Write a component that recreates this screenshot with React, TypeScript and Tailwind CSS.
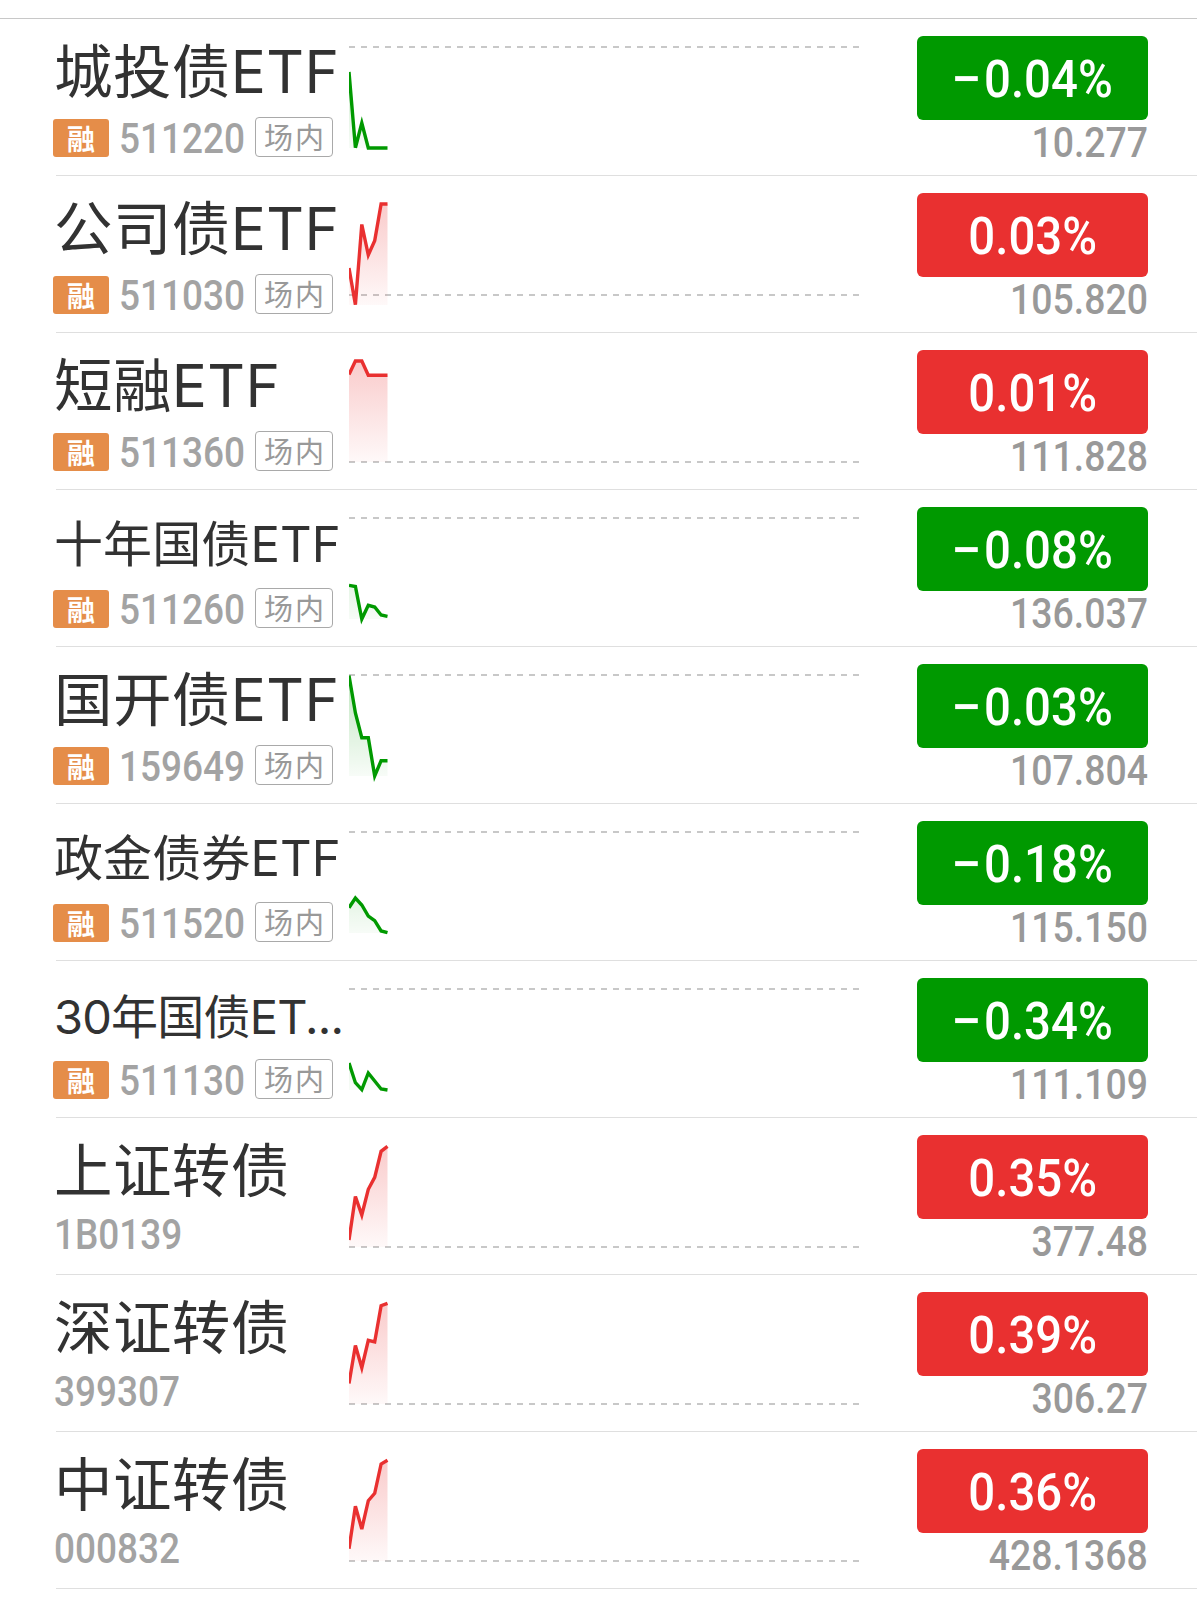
import React from 'react';
import clsx from 'clsx';

interface Quote {
    name: string;
    size: 'lg' | 'md' | 'sm';
    code: string;
    margin: boolean;
    change: string;
    price: string;
    up: boolean;
    base: number;
    points: number[];
}

// base = y of the previous close line, points = y of every tick so far
const quotes: Quote[] = [
    { name: '城投债ETF', size: 'lg', code: '511220', margin: true, change: '0.04%', price: '10.277', up: false, base: 28, points: [53, 128.7, 104, 129, 129, 129, 129] },
    { name: '公司债ETF', size: 'lg', code: '511030', margin: true, change: '0.03%', price: '105.820', up: true, base: 119, points: [92, 128.7, 48.5, 79, 64.7, 28, 28] },
    { name: '短融ETF', size: 'lg', code: '511360', margin: true, change: '0.01%', price: '111.828', up: true, base: 129, points: [41.5, 28, 28, 42.3, 42.3, 42.3, 42.3] },
    { name: '十年国债ETF', size: 'md', code: '511260', margin: true, change: '0.08%', price: '136.037', up: false, base: 28, points: [95.3, 96.5, 129, 115.3, 117, 125, 126.3] },
    { name: '国开债ETF', size: 'lg', code: '159649', margin: true, change: '0.03%', price: '107.804', up: false, base: 28, points: [28.5, 66, 90.7, 90.7, 129, 113.7, 113.7] },
    { name: '政金债券ETF', size: 'md', code: '511520', margin: true, change: '0.18%', price: '115.150', up: false, base: 28, points: [103.7, 94, 101, 112, 116.7, 127, 128.7] },
    { name: '30年国债ET...', size: 'sm', code: '511130', margin: true, change: '0.34%', price: '111.109', up: false, base: 28, points: [102, 121.7, 128.7, 112, 120, 128, 129] },
    { name: '上证转债', size: 'lg', code: '1B0139', margin: false, change: '0.35%', price: '377.48', up: true, base: 129, points: [122, 78.5, 97, 71.3, 59.3, 33.3, 28.3] },
    { name: '深证转债', size: 'lg', code: '399307', margin: false, change: '0.39%', price: '306.27', up: true, base: 129, points: [108.5, 70.5, 92.7, 65.3, 67, 30.7, 28.3] },
    { name: '中证转债', size: 'lg', code: '000832', margin: false, change: '0.36%', price: '428.1368', up: true, base: 129, points: [116.7, 74.3, 97, 68.7, 61.3, 32, 28.3] },
];

const nameSizes = {
    lg: 'text-[58.5px] leading-[105px] tracking-[0.4px]',
    md: 'text-[49px] leading-[110px] tracking-[0.1px]',
    sm: 'text-[47px] leading-[111px] tracking-[-0.8px]',
};

const STEP = 6.42;

const Sparkline: React.FC<{ quote: Quote }> = ({ quote }) => {
    const { points, up, base, code } = quote;
    const color = up ? '#e93030' : '#009900';
    const line = points.map((y, i) => `${(i * STEP).toFixed(1)},${y}`).join(' ');
    const end = ((points.length - 1) * STEP).toFixed(1);

    return (
        <svg width="511" height="156" viewBox="0 0 511 156" className="block shrink-0 overflow-hidden">
            <defs>
                <linearGradient id={`fill-${code}`} gradientUnits="userSpaceOnUse" x1="0" y1="28" x2="0" y2="129">
                    <stop offset="0" stopColor={color} stopOpacity="0.25" />
                    <stop offset="1" stopColor={color} stopOpacity="0.03" />
                </linearGradient>
            </defs>
            <line x1="0" x2="511" y1={base} y2={base} stroke="#c8c8c8" strokeWidth="2" strokeDasharray="6 6" />
            <polygon points={`0,129 ${line} ${end},129`} fill={`url(#fill-${code})`} />
            <polyline points={line} fill="none" stroke={color} strokeWidth="3.4" />
        </svg>
    );
};

const QuoteRow: React.FC<{ quote: Quote }> = ({ quote }) => (
    <div className="ml-14 flex h-[157px] border-b border-[#dfdfdf]">
        {/* Name and code */}
        <div className="w-[293px] shrink-0">
            <div className={clsx('-ml-[2px] h-[94px] whitespace-nowrap text-[#323232]', nameSizes[quote.size])}>
                {quote.name}
            </div>
            {quote.margin ? (
                <div className="-ml-[3px] flex h-11 items-center">
                    <span className="mt-[6px] flex h-[38px] w-14 shrink-0 items-center justify-center rounded-[3px] bg-[#e58d49] pt-[3px] text-[28px] leading-none font-bold text-white">
                        融
                    </span>
                    <span className="mt-[9px] ml-[10px] w-[136px] shrink-0">
                        <span className="inline-block origin-left scale-x-[0.88] font-[Roboto] text-[42px] leading-[38px] font-medium text-[#a3a3a3]">
                            {quote.code}
                        </span>
                    </span>
                    <span className="mt-[3px] flex h-[40px] w-[78px] shrink-0 items-center justify-center rounded-[4px] border border-[#a9a9a9] pt-[4px] pl-[2px] text-[29px] leading-none tracking-[2px] text-[#999999]">
                        场内
                    </span>
                </div>
            ) : (
                <div className="-ml-[2px] h-11 pt-[1px]">
                    <span className="inline-block origin-left scale-x-[0.88] font-[Roboto] text-[42px] leading-[44px] font-medium text-[#a3a3a3]">
                        {quote.code}
                    </span>
                </div>
            )}
        </div>

        <Sparkline quote={quote} />

        {/* Change and price */}
        <div className="ml-[57px] flex w-[231px] shrink-0 flex-col items-end pt-[17px]">
            <div
                className={clsx(
                    'flex h-[84px] w-full items-center justify-center rounded-[6px]',
                    quote.up ? 'bg-[#e93030]' : 'bg-[#009900]'
                )}
            >
                <span className="inline-block scale-x-[0.91] pt-[3px] font-[Roboto] text-[52px] leading-[81px] font-medium text-white">
                    {!quote.up && <span className="mr-[5px] inline-block scale-x-[1.15]">−</span>}
                    {quote.change}
                </span>
            </div>
            <span className="inline-block origin-right scale-x-[0.89] pt-[1px] font-[Roboto] text-[42px] leading-[44px] font-medium text-[#999999]">
                {quote.price}
            </span>
        </div>
    </div>
);

const App: React.FC = () => {
    return (
        <div className="h-[1598px] w-[1197px] overflow-hidden bg-white font-[Inter,'Noto_Sans_CJK_SC',sans-serif]">
            <div className="h-[19px] border-b border-[#c8c8c8]" />
            {quotes.map((quote) => (
                <QuoteRow key={quote.code} quote={quote} />
            ))}
        </div>
    );
};

export default App;
